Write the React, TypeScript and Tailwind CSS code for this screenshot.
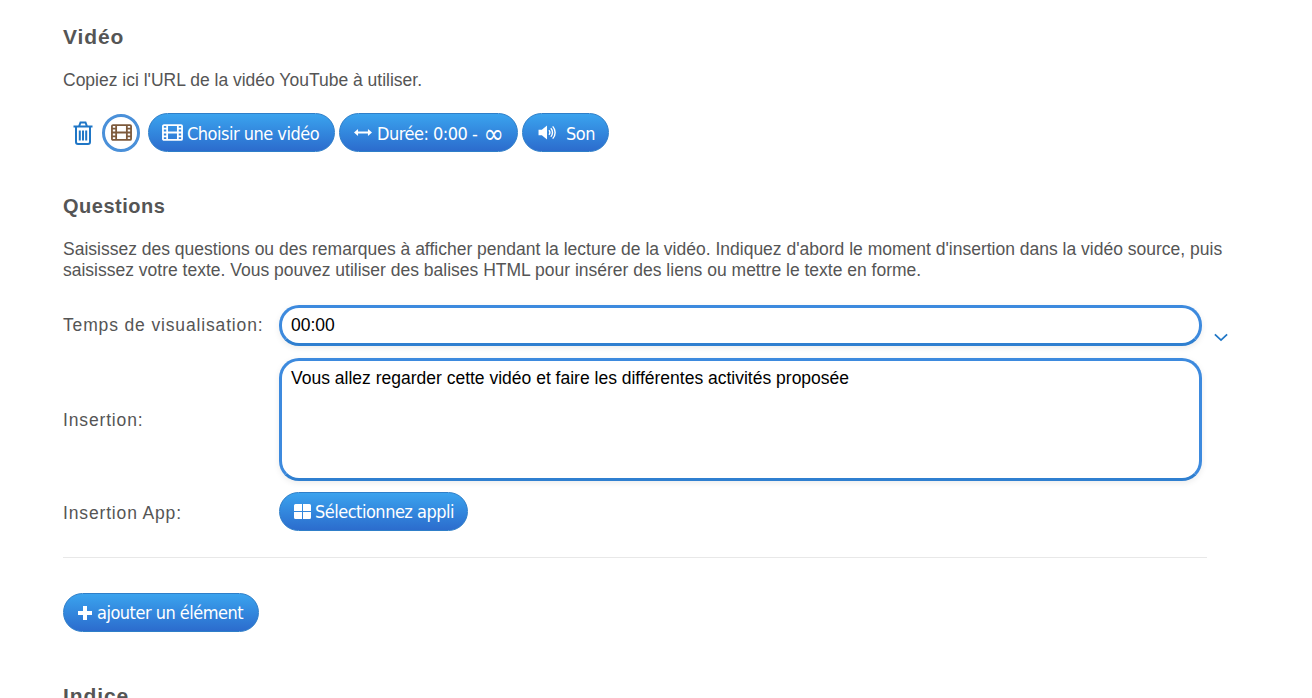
import React from "react";

const btnClass =
  "inline-flex items-center whitespace-nowrap gap-[3px] h-[39px] shrink-0 rounded-[20px] border border-[#2f7fc9] bg-gradient-to-b from-[#3ba3ee] to-[#2c6ccd] text-white text-[18px] tracking-[-0.5px] font-['DejaVu_Sans_Condensed','DejaVu_Sans',sans-serif] [font-stretch:condensed] leading-none";

const FilmIcon: React.FC<{ className?: string }> = ({ className }) => (
  <svg viewBox="0 0 20 16" className={className} fill="none" stroke="currentColor" strokeWidth="1.7">
    <rect x="0.9" y="0.9" width="18.2" height="14.2" rx="1" />
    <path d="M4.9 0.9v14.200M15.100 0.9v14.200M0.9 4.400h4M0.9 8h4M0.9 11.600h4M15.100 4.400h4M15.100 8h4M15.100 11.600h4M4.900 8h10.200" />
  </svg>
);

const TrashIcon = () => (
  <svg viewBox="0 0 20 24" className="w-[20px] h-[24px] shrink-0 text-[#1f76c6]" fill="none" stroke="currentColor" strokeWidth="2">
    <path d="M0.500 5.500h19M3 5.500V21a2 2 0 0 0 2 2h10a2 2 0 0 0 2-2V5.500M6 5.500l1.500-4h5l1.500 4M6.800 9.500v10M10 9.500v10M13.200 9.500v10" />
  </svg>
);

const ArrowsIcon = () => (
  <svg viewBox="0 0 20 10" className="w-[18px] h-[9px] shrink-0" fill="white">
    <path d="M0 5l4.500-4v3h11V1L20 5l-4.500 4V6h-11v3z" />
  </svg>
);

const VolumeIcon = () => (
  <svg viewBox="0 0 20 18" className="w-[19px] h-[17px] shrink-0" fill="none" stroke="white" strokeWidth="1.500">
    <path d="M0.500 6h3.500L9.500 1.500v15L4 12H0.500z" fill="white" stroke="none" />
    <path d="M11.500 6.500a3.500 3.500 0 0 1 0 5M13.500 4.500a6.500 6.500 0 0 1 0 9M15.500 2.500a9.500 9.500 0 0 1 0 13" />
  </svg>
);

const GridIcon = () => (
  <svg viewBox="0 0 17 15" className="w-[17px] h-[15px] shrink-0" fill="white">
    <path d="M1.500 0H8v7H0V1.500A1.500 1.500 0 0 1 1.500 0zM9 0h6.500A1.500 1.500 0 0 1 17 1.500V7H9zM0 8h8v7H1.500A1.500 1.500 0 0 1 0 13.500zM9 8h8v5.500a1.500 1.500 0 0 1-1.500 1.500H9z" />
  </svg>
);

const PlusIcon = () => (
  <svg viewBox="0 0 14 14" className="w-[14px] h-[14px] shrink-0" fill="white">
    <path d="M5 0h4v5h5v4H9v5H5V9H0V5h5z" />
  </svg>
);

const fieldClass =
  "w-[923px] shrink-0 border-[3px] border-[#3d8ade] border-b-[#2f7fd0] rounded-[20px] bg-white px-[9px] text-[17.5px] text-black shadow-[0_2px_6px_rgba(0,0,0,0.08)]";

const labelClass = "w-[216px] shrink-0 tracking-[0.85px] whitespace-nowrap";

const headingClass = "leading-[24px] font-bold text-[#555]";

export default function App() {
  return (
    <div className="h-[698px] overflow-hidden bg-white font-['Liberation_Sans',Arial,sans-serif] text-[17.5px] text-[#555] pl-[63px] pt-[25px]">
      <div className="w-[1144px]">
        <h2 className={`${headingClass} text-[21px] tracking-[0.9px]`}>Vidéo</h2>
        <p className="mt-[21px] leading-[21px]">Copiez ici l'URL de la vidéo YouTube à utiliser.</p>

        <div className="mt-[22px] flex items-center gap-[4px]">
          <div className="w-[35px] pl-[10px] flex items-center"><TrashIcon /></div>
          <div className="w-[38px] h-[38px] mr-[4px] rounded-full border-[3px] border-[#4a90d9] flex items-center justify-center text-[#7d5a3c]">
            <FilmIcon className="w-[21px] h-[17px] shrink-0" />
          </div>
          <button className={`${btnClass} px-[13px] w-[187px] gap-[4px]`}>
            <FilmIcon className="w-[21px] h-[17px] shrink-0" />
            <span className="mt-[2px]">Choisir une vidéo</span>
          </button>
          <button className={`${btnClass} px-[14px] w-[179px] gap-[5px]`}>
            <ArrowsIcon />
            <span className="mt-[2px] flex items-center gap-[6px]">
              Durée: 0:00 -<span className="text-[27px] leading-[18px]">∞</span>
            </span>
          </button>
          <button className={`${btnClass} px-[15px] w-[87px] gap-[9px]`}>
            <VolumeIcon />
            <span className="mt-[2px]">Son</span>
          </button>
        </div>

        <div className="mt-[42px]"><h2 className={`${headingClass} text-[20px] tracking-[0.5px]`}>Questions</h2></div>
        <p className="mt-[21px] leading-[21px] w-[1170px]">
          Saisissez des questions ou des remarques à afficher pendant la lecture de la vidéo. Indiquez d'abord le moment d'insertion dans la vidéo source, puis saisissez votre texte. Vous pouvez utiliser des balises HTML pour insérer des liens ou mettre le texte en forme.
        </p>

        <div className="mt-[24px] flex items-center">
          <label className={labelClass}>Temps de visualisation:</label>
          <input readOnly value="00:00" className={`${fieldClass} h-[41px] outline-none`} />
          <svg viewBox="0 0 16 10" className="w-[14px] h-[9px] ml-[12px] mt-[24px] shrink-0 text-[#1f76c6]" fill="none" stroke="currentColor" strokeWidth="2">
            <path d="M1 1.500l7 6.500 7-6.500" />
          </svg>
        </div>

        <div className="mt-[12px] flex items-center">
          <label className={`${labelClass} mt-[1px]`}>Insertion:</label>
          <textarea
            readOnly
            value="Vous allez regarder cette vidéo et faire les différentes activités proposée"
            className={`${fieldClass} h-[123px] py-[7px] leading-[21px] resize-none outline-none`}
          />
        </div>

        <div className="mt-[11px] flex items-center">
          <label className={`${labelClass} mt-[4px]`}>Insertion App:</label>
          <button className={`${btnClass} px-[14px] w-[189px] gap-[4px]`}>
            <GridIcon />
            <span className="mt-[1px]">Sélectionnez appli</span>
          </button>
        </div>

        <hr className="mt-[26px] border-t border-[#e8e8e8]" />

        <button className={`${btnClass} mt-[35px] px-[14px] w-[196px] gap-[5px]`}>
          <PlusIcon />
          <span>ajouter un élément</span>
        </button>

        <div className="mt-[52px]"><h2 className={`${headingClass} text-[21px] tracking-[0.9px]`}>Indice</h2></div>
      </div>
    </div>
  );
}
